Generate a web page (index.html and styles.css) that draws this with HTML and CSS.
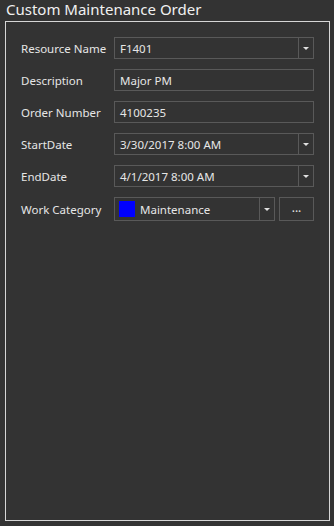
FILE: index.html
```html
<!DOCTYPE html>
<html lang="en">
<head>
    <meta charset="UTF-8">
    <meta name="viewport" content="width=device-width, initial-scale=1.0">
    <title>Custom Maintenance Order</title>
    <link rel="stylesheet" href="styles.css">
</head>
<body>

    <div class="panel-title">Custom Maintenance Order</div>

    <div class="group-box">
        <div class="form-grid">
            <label class="field-label">Resource Name</label>
            <div class="field combo">
                <span class="field-value">F1401</span>
                <span class="drop-btn"><span class="arrow"></span></span>
            </div>

            <label class="field-label">Description</label>
            <div class="field">
                <span class="field-value">Major PM</span>
            </div>

            <label class="field-label">Order Number</label>
            <div class="field">
                <span class="field-value">4100235</span>
            </div>

            <label class="field-label">StartDate</label>
            <div class="field combo">
                <span class="field-value">3/30/2017 8:00 AM</span>
                <span class="drop-btn"><span class="arrow"></span></span>
            </div>

            <label class="field-label">EndDate</label>
            <div class="field combo">
                <span class="field-value">4/1/2017 8:00 AM</span>
                <span class="drop-btn"><span class="arrow"></span></span>
            </div>

            <label class="field-label">Work Category</label>
            <div class="category-row">
                <div class="field combo tall">
                    <span class="swatch"></span>
                    <span class="field-value">Maintenance</span>
                    <span class="drop-btn"><span class="arrow"></span></span>
                </div>
                <button class="more-btn">...</button>
            </div>
        </div>
    </div>

</body>
</html>
```

FILE: styles.css
```css
html, body {
    height: 100%;
}

body {
    margin: 0;
    background-color: #333333;
    color: #e6e6e6;
    font-family: "Noto Sans", "Open Sans", sans-serif;
    font-size: 11.5px;
    display: flex;
    flex-direction: column;
    box-sizing: border-box;
    padding-bottom: 5px;
}

.panel-title {
    font-size: 15px;
    line-height: 19px;
    padding: 0 0 2px 6px;
    color: #f0f0f0;
}

.group-box {
    flex: 1;
    margin: 0 4px 0 5px;
    border: 1px solid #d6d6d6;
    padding: 15px 15px 0 15px;
}

.form-grid {
    display: grid;
    grid-template-columns: 93px 1fr;
    row-gap: 10px;
    align-items: center;
}

.field-label {
    line-height: 16px;
    padding-top: 2px;
    color: #e6e6e6;
}

.field {
    display: flex;
    align-items: center;
    height: 22px;
    box-sizing: border-box;
    border: 1px solid #595959;
}

.field.tall {
    height: 24px;
}

.field-value {
    flex: 1;
    padding-left: 5px;
    padding-top: 1px;
    white-space: nowrap;
}

.drop-btn {
    width: 14px;
    align-self: stretch;
    border-left: 1px solid #595959;
    display: flex;
    align-items: center;
    justify-content: center;
}

.arrow {
    width: 0;
    height: 0;
    border-left: 3px solid transparent;
    border-right: 3px solid transparent;
    border-top: 3px solid #e0e0e0;
}

.swatch {
    width: 16px;
    height: 16px;
    margin-left: 4px;
    background-color: #0000ff;
}

.category-row {
    display: flex;
    gap: 4px;
}

.category-row .field {
    flex: 1;
}

.more-btn {
    width: 35px;
    height: 24px;
    box-sizing: border-box;
    border: 1px solid #595959;
    background-color: #333333;
    color: #e6e6e6;
    font-family: inherit;
    font-size: 12px;
    padding: 0 0 4px 0;
    cursor: pointer;
}
```
